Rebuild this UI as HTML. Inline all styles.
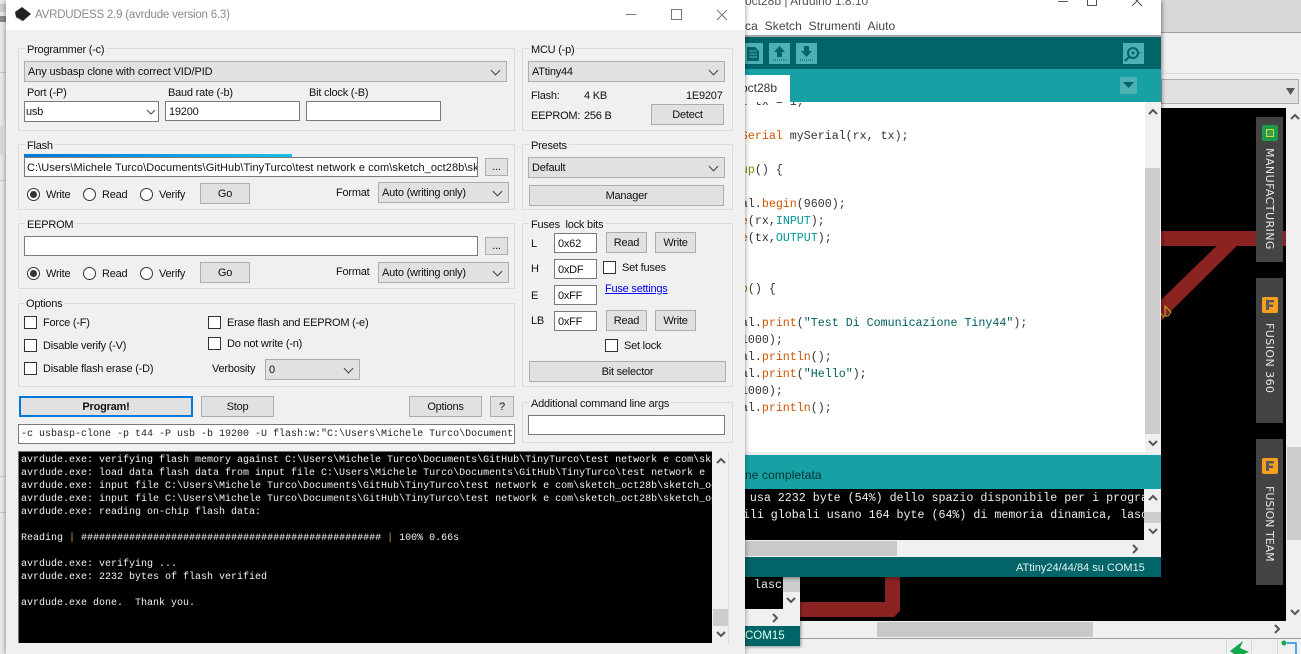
<!DOCTYPE html>
<html><head><meta charset="utf-8"><style>
html,body{margin:0;padding:0;width:1301px;height:654px;overflow:hidden;background:#f0f0f0}
body{position:relative;font-family:"Liberation Sans",sans-serif;font-size:11px;letter-spacing:-.22px;color:#111}
div,span.a,svg{position:absolute;box-sizing:border-box}
.t{position:absolute;white-space:nowrap;line-height:14px;height:14px;margin-top:1px}
.g{position:absolute;border:1px solid #dcdcdc;box-sizing:border-box}
.l{position:absolute;white-space:nowrap;background:#f0f0f0;line-height:14px;padding:0 2px;margin-top:1px}
.c{position:absolute;background:#e1e1e1;border:1px solid #adadad;line-height:21px;padding-left:3px;white-space:nowrap;overflow:hidden}
.c:after{content:"";position:absolute;right:7px;top:5px;width:6px;height:6px;border-right:1px solid #444;border-bottom:1px solid #444;transform:rotate(45deg)}
.b{position:absolute;background:#e1e1e1;border:1px solid #adadad;text-align:center;line-height:21px;white-space:nowrap}
.i{position:absolute;background:#fff;border:1px solid #7a7a7a;line-height:20px;padding-left:3px;white-space:nowrap;overflow:hidden}
.k{position:absolute;width:13px;height:13px;background:#fff;border:1px solid #333}
.r{position:absolute;width:13px;height:13px;background:#fff;border:1px solid #333;border-radius:50%}
.r.on:after{content:"";position:absolute;left:2px;top:2px;width:7px;height:7px;border-radius:50%;background:#333}
.m{font-family:"Liberation Mono",monospace;font-size:10px;letter-spacing:0;white-space:pre;line-height:13px;position:absolute}
.code{font-family:"Liberation Mono",monospace;font-size:11.65px;letter-spacing:0;white-space:pre;line-height:17px;position:absolute;color:#333}
.o{color:#d35400}.e{color:#00979c}.gr{color:#728e00}.s{color:#005c5f}
.p{background:#444;position:absolute;left:1256px;width:27px}
.v{position:absolute;left:1256px;width:27px;writing-mode:vertical-rl;font-family:"DejaVu Sans",sans-serif;font-size:11px;color:#e8e8e8;line-height:27px;white-space:nowrap}
.tb{position:absolute;background:#4db0b3}
</style></head><body>

<!-- background app -->
<div style="left:0;top:0;width:1301px;height:654px;background:#f0f0f0"></div>
<div style="left:1161px;top:0;width:140px;height:32px;background:#d8d8d8"></div>
<div style="left:1161px;top:32px;width:140px;height:1px;background:#a0a0a0"></div>
<div style="left:1161px;top:73px;width:140px;height:1px;background:#dcdcdc"></div>
<div style="left:1161px;top:79px;width:138px;height:25px;background:#e1e1e1;border:1px solid #adadad"></div>
<svg style="left:1286px;top:87px" width="10" height="9"><path d="M0 1H9L4.5 8Z" fill="#555"/></svg>
<div style="left:800px;top:108px;width:486px;height:513px;background:#000"></div>
<div style="left:1161px;top:231px;width:125px;height:15px;background:#8b2323"></div>
<svg style="left:1161px;top:245px" width="80" height="80"><path d="M55.7 0.7L0 55V76L76 0.7Z" fill="#8b2323"/><path d="M4 61l6 6 -3 4h-3z M0 68 l3 5" fill="none" stroke="#c9b22e" stroke-width="1"/></svg>
<svg style="left:800px;top:577px" width="101" height="41"><path d="M85 0H100V34L94 40H0V25H85Z" fill="#8b2323"/></svg>
<div class="p" style="top:117px;height:145px"></div>
<div class="p" style="top:278px;height:145px"></div>
<div class="p" style="top:439px;height:146px"></div>
<div style="left:1262px;top:125px;width:16px;height:16px;background:#1d9a4b;border-radius:2px"></div>
<div style="left:1266px;top:129px;width:8px;height:8px;border:1px solid #d8d83a;background:#3aa050"></div>
<div style="left:1262px;top:297px;width:16px;height:16px;background:#f5a11f;border-radius:2px"></div>
<div style="left:1262px;top:458px;width:16px;height:16px;background:#f5a11f;border-radius:2px"></div>
<svg style="left:1262px;top:297px" width="16" height="16"><path d="M4 13V3H12V5.5H7V7.5H11V10H7V13Z" fill="#5a5a5a"/></svg>
<svg style="left:1262px;top:458px" width="16" height="16"><path d="M4 13V3H12V5.5H7V7.5H11V10H7V13Z" fill="#5a5a5a"/></svg>
<div class="v" style="top:148px;letter-spacing:.45px">MANUFACTURING</div>
<div class="v" style="top:323px;letter-spacing:.45px">FUSION 360</div>
<div class="v" style="top:486px;letter-spacing:0">FUSION TEAM</div>
<!-- right scrollbar -->
<div style="left:1287px;top:447px;width:14px;height:93px;background:#cdcdcd"></div>
<svg style="left:1290px;top:113px" width="10" height="8"><path d="M1 6L5 2L9 6" fill="none" stroke="#555" stroke-width="2"/></svg>
<svg style="left:1290px;top:608px" width="10" height="8"><path d="M1 2L5 6L9 2" fill="none" stroke="#555" stroke-width="2"/></svg>
<div style="left:877px;top:622px;width:216px;height:15px;background:#c9c9c9"></div>
<svg style="left:1273px;top:624px" width="8" height="10"><path d="M2 1L6 5L2 9" fill="none" stroke="#555" stroke-width="2"/></svg>
<div style="left:745px;top:638px;width:556px;height:1px;background:#a0a0a0"></div>
<svg style="left:1229px;top:640px" width="24" height="14"><path d="M1 11L14 1L11 8L20 12L15 14H5Z" fill="#12a84e"/></svg>
<div style="left:1226px;top:639px;width:1px;height:15px;background:#d8d8d8"></div>
<div style="left:1251px;top:639px;width:1px;height:15px;background:#d8d8d8"></div>
<div style="left:1277px;top:639px;width:1px;height:15px;background:#d8d8d8"></div>
<svg style="left:1281px;top:640px" width="20" height="14"><circle cx="3" cy="3" r="2.5" fill="#12a84e"/><path d="M6 3H15V14" fill="none" stroke="#1e88e5" stroke-width="1.5"/></svg>

<!-- second arduino window behind -->
<div style="left:745px;top:577px;width:55px;height:69px;background:#f0f0f0;box-shadow:1px 1px 3px rgba(0,0,0,.4)"></div>
<div style="left:745px;top:577px;width:38px;height:32px;background:#000"></div>
<div class="code" style="left:754px;top:577px;color:#eee;width:29px;overflow:hidden">lasci</div>
<div style="left:783px;top:577px;width:17px;height:15px;background:#cdcdcd"></div>
<svg style="left:786px;top:596px" width="10" height="8"><path d="M1 2L5 6L9 2" fill="none" stroke="#555" stroke-width="2"/></svg>
<svg style="left:771px;top:613px" width="8" height="10"><path d="M2 1L6 5L2 9" fill="none" stroke="#555" stroke-width="2"/></svg>
<div style="left:745px;top:626px;width:55px;height:20px;background:#006468"></div>
<div class="t" style="left:745px;top:628px;color:#dfe;font-size:11.5px;letter-spacing:0">COM15</div>

<!-- front arduino window -->
<div style="left:745px;top:0;width:416px;height:577px;background:#fff;box-shadow:1px 1px 4px rgba(0,0,0,.45);overflow:hidden">
</div>
<div class="t" style="left:745px;top:-7px;color:#555;font-size:12px;letter-spacing:0">oct28b | Arduino 1.8.10</div>
<div style="left:1058px;top:1px;width:10px;height:1px;background:#555"></div>
<div style="left:1087px;top:-4px;width:10px;height:10px;border:1px solid #555"></div>
<svg style="left:1132px;top:0" width="12" height="7"><path d="M0 -4L10 6M10 -4L0 6" stroke="#555" fill="none"/></svg>
<div class="t" style="left:745px;top:18px;color:#444;font-size:12px;letter-spacing:.08px">ca&nbsp;&nbsp;Sketch&nbsp;&nbsp;Strumenti&nbsp;&nbsp;Aiuto</div>
<div style="left:745px;top:35px;width:416px;height:2px;background:#a8a8a8"></div>
<div style="left:745px;top:37px;width:416px;height:32px;background:#006468"></div>
<div class="tb" style="left:745px;top:43px;width:18px;height:21px"></div>
<div class="tb" style="left:769px;top:43px;width:21px;height:21px"></div>
<div class="tb" style="left:796px;top:43px;width:21px;height:21px"></div>
<div class="tb" style="left:1123px;top:43px;width:21px;height:21px"></div>
<svg style="left:745px;top:43px" width="18" height="21"><path d="M2 4H10L14 8V18H2Z" fill="#006468"/><path d="M4 8H12M4 11H12M4 14H12" stroke="#4db0b3"/></svg>
<svg style="left:769px;top:43px" width="21" height="21"><path d="M10.5 3L16 9H13V14H8V9H5Z" fill="#006468"/><path d="M4 17H17" stroke="#006468" stroke-dasharray="1 1"/></svg>
<svg style="left:796px;top:43px" width="21" height="21"><path d="M10.5 14L16 8H13V3H8V8H5Z" fill="#006468"/><path d="M4 17H17" stroke="#006468" stroke-dasharray="1 1"/></svg>
<svg style="left:1123px;top:43px" width="21" height="21"><circle cx="10" cy="10" r="5" fill="none" stroke="#006468" stroke-width="2"/><circle cx="10" cy="10" r="1.5" fill="#006468"/><path d="M6 14L2 18" stroke="#006468" stroke-width="2"/><path d="M16 10H20" stroke="#006468" stroke-dasharray="1 1"/></svg>
<div style="left:745px;top:69px;width:416px;height:33px;background:#17a1a5"></div>
<div style="left:745px;top:75px;width:45px;height:27px;background:#fff;overflow:hidden"><div class="t" style="left:-4px;top:5px;color:#333;font-size:12px;letter-spacing:0">oct28b</div></div>
<div style="left:1120px;top:77px;width:17px;height:17px;background:#4db0b3"></div>
<svg style="left:1123px;top:82px" width="11" height="7"><path d="M0 0H11L5.5 6Z" fill="#006468"/></svg>

<!-- code -->
<div style="left:745px;top:102px;width:400px;height:350px;overflow:hidden;background:#fff">
<div class="code" style="left:-60px;top:-8px;width:500px"><span class="e">const int</span> tx = 1;

<span class="o">SoftwareSerial</span> mySerial(rx, tx);

<span class="e">void</span> <span class="gr">setup</span>() {

  mySerial.<span class="o">begin</span>(9600);
  <span class="o">pinMode</span>(rx,<span class="e">INPUT</span>);
  <span class="o">pinMode</span>(tx,<span class="e">OUTPUT</span>);
}

<span class="e">void</span> <span class="gr">loop</span>() {

  mySerial.<span class="o">print</span>(<span class="s">"Test Di Comunicazione Tiny44"</span>);
  <span class="o">delay</span>(1000);
  mySerial.<span class="o">println</span>();
  mySerial.<span class="o">print</span>(<span class="s">"Hello"</span>);
  <span class="o">delay</span>(1000);
  mySerial.<span class="o">println</span>();</div>
</div>
<div style="left:1145px;top:102px;width:16px;height:350px;background:#f0f0f0"></div>
<div style="left:1145px;top:168px;width:15px;height:266px;background:#cdcdcd"></div>
<svg style="left:1148px;top:108px" width="10" height="8"><path d="M1 6L5 2L9 6" fill="none" stroke="#555" stroke-width="2"/></svg>
<svg style="left:1148px;top:439px" width="10" height="8"><path d="M1 2L5 6L9 2" fill="none" stroke="#555" stroke-width="2"/></svg>
<div style="left:745px;top:452px;width:416px;height:3px;background:#eee"></div>
<div style="left:745px;top:455px;width:416px;height:34px;background:#17a1a5"></div>
<div class="t" style="left:745px;top:467px;color:#033;font-size:12px;letter-spacing:.1px">ne completata</div>
<div style="left:745px;top:489px;width:399px;height:51px;background:#000;overflow:hidden">
<div class="code" style="left:-65px;top:1px;color:#eee;width:500px">Lo sketch usa 2232 byte (54%) dello spazio disponibile per i programmi.
Le variabili globali usano 164 byte (64%) di memoria dinamica, lasciando</div></div>
<div style="left:1144px;top:489px;width:17px;height:51px;background:#f0f0f0"></div>
<div style="left:1144px;top:512px;width:17px;height:11px;background:#cdcdcd"></div>
<svg style="left:1148px;top:494px" width="10" height="8"><path d="M1 6L5 2L9 6" fill="none" stroke="#555" stroke-width="2"/></svg>
<svg style="left:1148px;top:527px" width="10" height="8"><path d="M1 2L5 6L9 2" fill="none" stroke="#555" stroke-width="2"/></svg>
<div style="left:745px;top:540px;width:416px;height:17px;background:#f0f0f0"></div>
<div style="left:745px;top:541px;width:152px;height:15px;background:#c9c9c9"></div>
<svg style="left:1131px;top:544px" width="8" height="10"><path d="M2 1L6 5L2 9" fill="none" stroke="#555" stroke-width="2"/></svg>
<div style="left:745px;top:557px;width:416px;height:20px;background:#006468"></div>
<div class="t" style="left:1016px;top:560px;color:#e8f4f4;font-size:11px;letter-spacing:0">ATtiny24/44/84 su COM15</div>

<!-- left strip -->
<div style="left:0;top:0;width:6px;height:654px;background:#e9e9e9"></div>
<div style="left:0;top:4px;width:6px;height:8px;background:#cfcfcf"></div>
<div style="left:0;top:16px;width:6px;height:6px;background:#8c8c8c"></div>
<div style="left:0;top:72px;width:6px;height:1px;background:#ccc"></div>
<div style="left:0;top:126px;width:3px;height:29px;background:#d8d8d8"></div>
<div style="left:0;top:180px;width:6px;height:1px;background:#ccc"></div>
<div style="left:0;top:476px;width:6px;height:1px;background:#ccc"></div>
<div style="left:0;top:512px;width:6px;height:1px;background:#ccc"></div>

<!-- AVRDUDESS window -->
<div style="left:6px;top:0;width:739px;height:654px;background:#f0f0f0;box-shadow:0 0 5px rgba(0,0,0,.45)"></div>
<div style="left:6px;top:0;width:739px;height:30px;background:#fff"></div>
<svg style="left:14px;top:6px" width="18" height="18"><path d="M1 6L8 1L17 8L9 15L2 11Z" fill="#222"/><path d="M2 11L9 15" stroke="#777"/></svg>
<div class="t" style="left:35px;top:7px;color:#8a8a8a;font-size:11.5px;letter-spacing:-.2px">AVRDUDESS 2.9 (avrdude version 6.3)</div>
<div style="left:626px;top:14px;width:10px;height:1px;background:#777"></div>
<div style="left:671px;top:9px;width:11px;height:11px;border:1px solid #777"></div>
<svg style="left:716px;top:9px" width="12" height="12"><path d="M1 1L11 11M11 1L1 11" stroke="#777" fill="none"/></svg>

<!-- Programmer -->
<div class="g" style="left:18px;top:48px;width:497px;height:83px"></div>
<div class="l" style="left:25px;top:42px">Programmer (-c)</div>
<div class="c" style="left:24px;top:61px;width:483px;height:21px;letter-spacing:-.12px">Any usbasp clone with correct VID/PID</div>
<div class="t" style="left:27px;top:85px">Port (-P)</div>
<div class="t" style="left:168px;top:85px">Baud rate (-b)</div>
<div class="t" style="left:309px;top:85px">Bit clock (-B)</div>
<div class="i" style="left:24px;top:101px;width:135px;height:21px;padding-left:1px">usb</div>
<svg style="left:146px;top:109px" width="10" height="7"><path d="M1 1L5 5L9 1" fill="none" stroke="#444"/></svg>
<div class="i" style="left:165px;top:101px;width:135px;height:20px">19200</div>
<div class="i" style="left:306px;top:101px;width:135px;height:20px"></div>

<!-- MCU -->
<div class="g" style="left:522px;top:48px;width:211px;height:83px"></div>
<div class="l" style="left:529px;top:42px">MCU (-p)</div>
<div class="c" style="left:528px;top:61px;width:197px;height:21px">ATtiny44</div>
<div class="t" style="left:531px;top:88px">Flash:</div>
<div class="t" style="left:584px;top:88px">4 KB</div>
<div class="t" style="left:686px;top:88px">1E9207</div>
<div class="t" style="left:531px;top:108px">EEPROM:</div>
<div class="t" style="left:584px;top:108px">256 B</div>
<div class="b" style="left:651px;top:104px;width:73px;height:21px">Detect</div>

<!-- Flash -->
<div class="g" style="left:18px;top:144px;width:497px;height:66px"></div>
<div class="l" style="left:25px;top:138px">Flash</div>
<div class="i" style="left:24px;top:157px;width:454px;height:20px;padding-left:2px;letter-spacing:.08px">C:\Users\Michele Turco\Documents\GitHub\TinyTurco\test network e com\sketch_oct28b\sketch_oct28b</div>
<div style="left:24px;top:154px;width:268px;height:3px;background:linear-gradient(90deg,#0078d7,#19c0ef)"></div>
<div class="b" style="left:485px;top:158px;width:23px;height:18px;line-height:17px">...</div>
<div class="r on" style="left:27px;top:188px"></div><div class="t" style="left:46px;top:187px">Write</div>
<div class="r" style="left:83px;top:188px"></div><div class="t" style="left:102px;top:187px">Read</div>
<div class="r" style="left:140px;top:188px"></div><div class="t" style="left:159px;top:187px">Verify</div>
<div class="b" style="left:200px;top:183px;width:50px;height:21px">Go</div>
<div class="t" style="left:336px;top:185px">Format</div>
<div class="c" style="left:378px;top:182px;width:131px;height:21px">Auto (writing only)</div>

<!-- Presets -->
<div class="g" style="left:522px;top:144px;width:211px;height:66px"></div>
<div class="l" style="left:529px;top:138px">Presets</div>
<div class="c" style="left:528px;top:157px;width:197px;height:21px">Default</div>
<div class="b" style="left:529px;top:185px;width:195px;height:21px">Manager</div>

<!-- EEPROM -->
<div class="g" style="left:18px;top:223px;width:497px;height:66px"></div>
<div class="l" style="left:25px;top:217px">EEPROM</div>
<div class="i" style="left:24px;top:236px;width:454px;height:20px"></div>
<div class="b" style="left:485px;top:237px;width:23px;height:18px;line-height:17px">...</div>
<div class="r on" style="left:27px;top:267px"></div><div class="t" style="left:46px;top:266px">Write</div>
<div class="r" style="left:83px;top:267px"></div><div class="t" style="left:102px;top:266px">Read</div>
<div class="r" style="left:140px;top:267px"></div><div class="t" style="left:159px;top:266px">Verify</div>
<div class="b" style="left:200px;top:262px;width:50px;height:21px">Go</div>
<div class="t" style="left:336px;top:264px">Format</div>
<div class="c" style="left:378px;top:262px;width:131px;height:21px">Auto (writing only)</div>

<!-- Options -->
<div class="g" style="left:18px;top:303px;width:497px;height:84px"></div>
<div class="l" style="left:24px;top:296px">Options</div>
<div class="k" style="left:24px;top:316px"></div><div class="t" style="left:43px;top:315px">Force (-F)</div>
<div class="k" style="left:24px;top:339px"></div><div class="t" style="left:43px;top:338px">Disable verify (-V)</div>
<div class="k" style="left:24px;top:362px"></div><div class="t" style="left:43px;top:361px">Disable flash erase (-D)</div>
<div class="k" style="left:208px;top:316px"></div><div class="t" style="left:227px;top:315px">Erase flash and EEPROM (-e)</div>
<div class="k" style="left:208px;top:337px"></div><div class="t" style="left:227px;top:336px">Do not write (-n)</div>
<div class="t" style="left:212px;top:361px">Verbosity</div>
<div class="c" style="left:265px;top:359px;width:95px;height:21px">0</div>

<!-- Fuses -->
<div class="g" style="left:522px;top:223px;width:211px;height:164px"></div>
<div class="l" style="left:529px;top:217px">Fuses&nbsp; lock bits</div>
<div class="t" style="left:531px;top:236px">L</div>
<div class="i" style="left:554px;top:233px;width:43px;height:20px">0x62</div>
<div class="b" style="left:606px;top:232px;width:41px;height:21px">Read</div>
<div class="b" style="left:655px;top:232px;width:41px;height:21px">Write</div>
<div class="t" style="left:531px;top:261px">H</div>
<div class="i" style="left:554px;top:259px;width:43px;height:20px">0xDF</div>
<div class="k" style="left:603px;top:261px"></div><div class="t" style="left:622px;top:260px">Set fuses</div>
<div class="t" style="left:531px;top:288px">E</div>
<div class="i" style="left:554px;top:285px;width:43px;height:20px">0xFF</div>
<div class="t" style="left:605px;top:281px;color:#0000ee;text-decoration:underline">Fuse settings</div>
<div class="t" style="left:531px;top:313px">LB</div>
<div class="i" style="left:554px;top:311px;width:43px;height:20px">0xFF</div>
<div class="b" style="left:606px;top:310px;width:41px;height:21px">Read</div>
<div class="b" style="left:655px;top:310px;width:41px;height:21px">Write</div>
<div class="k" style="left:605px;top:339px"></div><div class="t" style="left:624px;top:338px">Set lock</div>
<div class="b" style="left:529px;top:361px;width:197px;height:21px">Bit selector</div>

<!-- Buttons -->
<div class="b" style="left:19px;top:396px;width:174px;height:21px;border:2px solid #0078d7;font-weight:bold;line-height:19px">Program!</div>
<div class="b" style="left:201px;top:396px;width:73px;height:21px">Stop</div>
<div class="b" style="left:409px;top:396px;width:73px;height:21px">Options</div>
<div class="b" style="left:490px;top:396px;width:24px;height:21px">?</div>
<div class="g" style="left:522px;top:402px;width:211px;height:41px"></div>
<div class="l" style="left:529px;top:396px">Additional command line args</div>
<div class="i" style="left:528px;top:415px;width:197px;height:20px"></div>
<div class="i m" style="left:18px;top:424px;width:497px;height:20px;line-height:20px;padding-left:2px;color:#222">-c usbasp-clone -p t44 -P usb -b 19200 -U flash:w:"C:\Users\Michele Turco\Document</div>

<!-- Log -->
<div style="left:18px;top:451px;width:694px;height:192px;background:#000;border-top:1px solid #777;border-left:1px solid #777;overflow:hidden">
<div class="m" style="left:2px;top:2px;color:#f2f2f2">avrdude.exe: verifying flash memory against C:\Users\Michele Turco\Documents\GitHub\TinyTurco\test network e com\sketch_oct28b
avrdude.exe: load data flash data from input file C:\Users\Michele Turco\Documents\GitHub\TinyTurco\test network e
avrdude.exe: input file C:\Users\Michele Turco\Documents\GitHub\TinyTurco\test network e com\sketch_oct28b\sketch_oct28b
avrdude.exe: input file C:\Users\Michele Turco\Documents\GitHub\TinyTurco\test network e com\sketch_oct28b\sketch_oct28b
avrdude.exe: reading on-chip flash data:

Reading <span style="color:#d99a4a">|</span> ################################################## <span style="color:#d99a4a">|</span> 100% 0.66s

avrdude.exe: verifying ...
avrdude.exe: 2232 bytes of flash verified

avrdude.exe done.  Thank you.</div></div>
<div style="left:712px;top:451px;width:17px;height:193px;background:#f0f0f0;border-right:1px solid #ddd"></div>
<div style="left:713px;top:609px;width:15px;height:17px;background:#cdcdcd"></div>
<svg style="left:716px;top:457px" width="10" height="8"><path d="M1 6L5 2L9 6" fill="none" stroke="#555" stroke-width="2"/></svg>
<svg style="left:716px;top:630px" width="10" height="8"><path d="M1 2L5 6L9 2" fill="none" stroke="#555" stroke-width="2"/></svg>
</body></html>
